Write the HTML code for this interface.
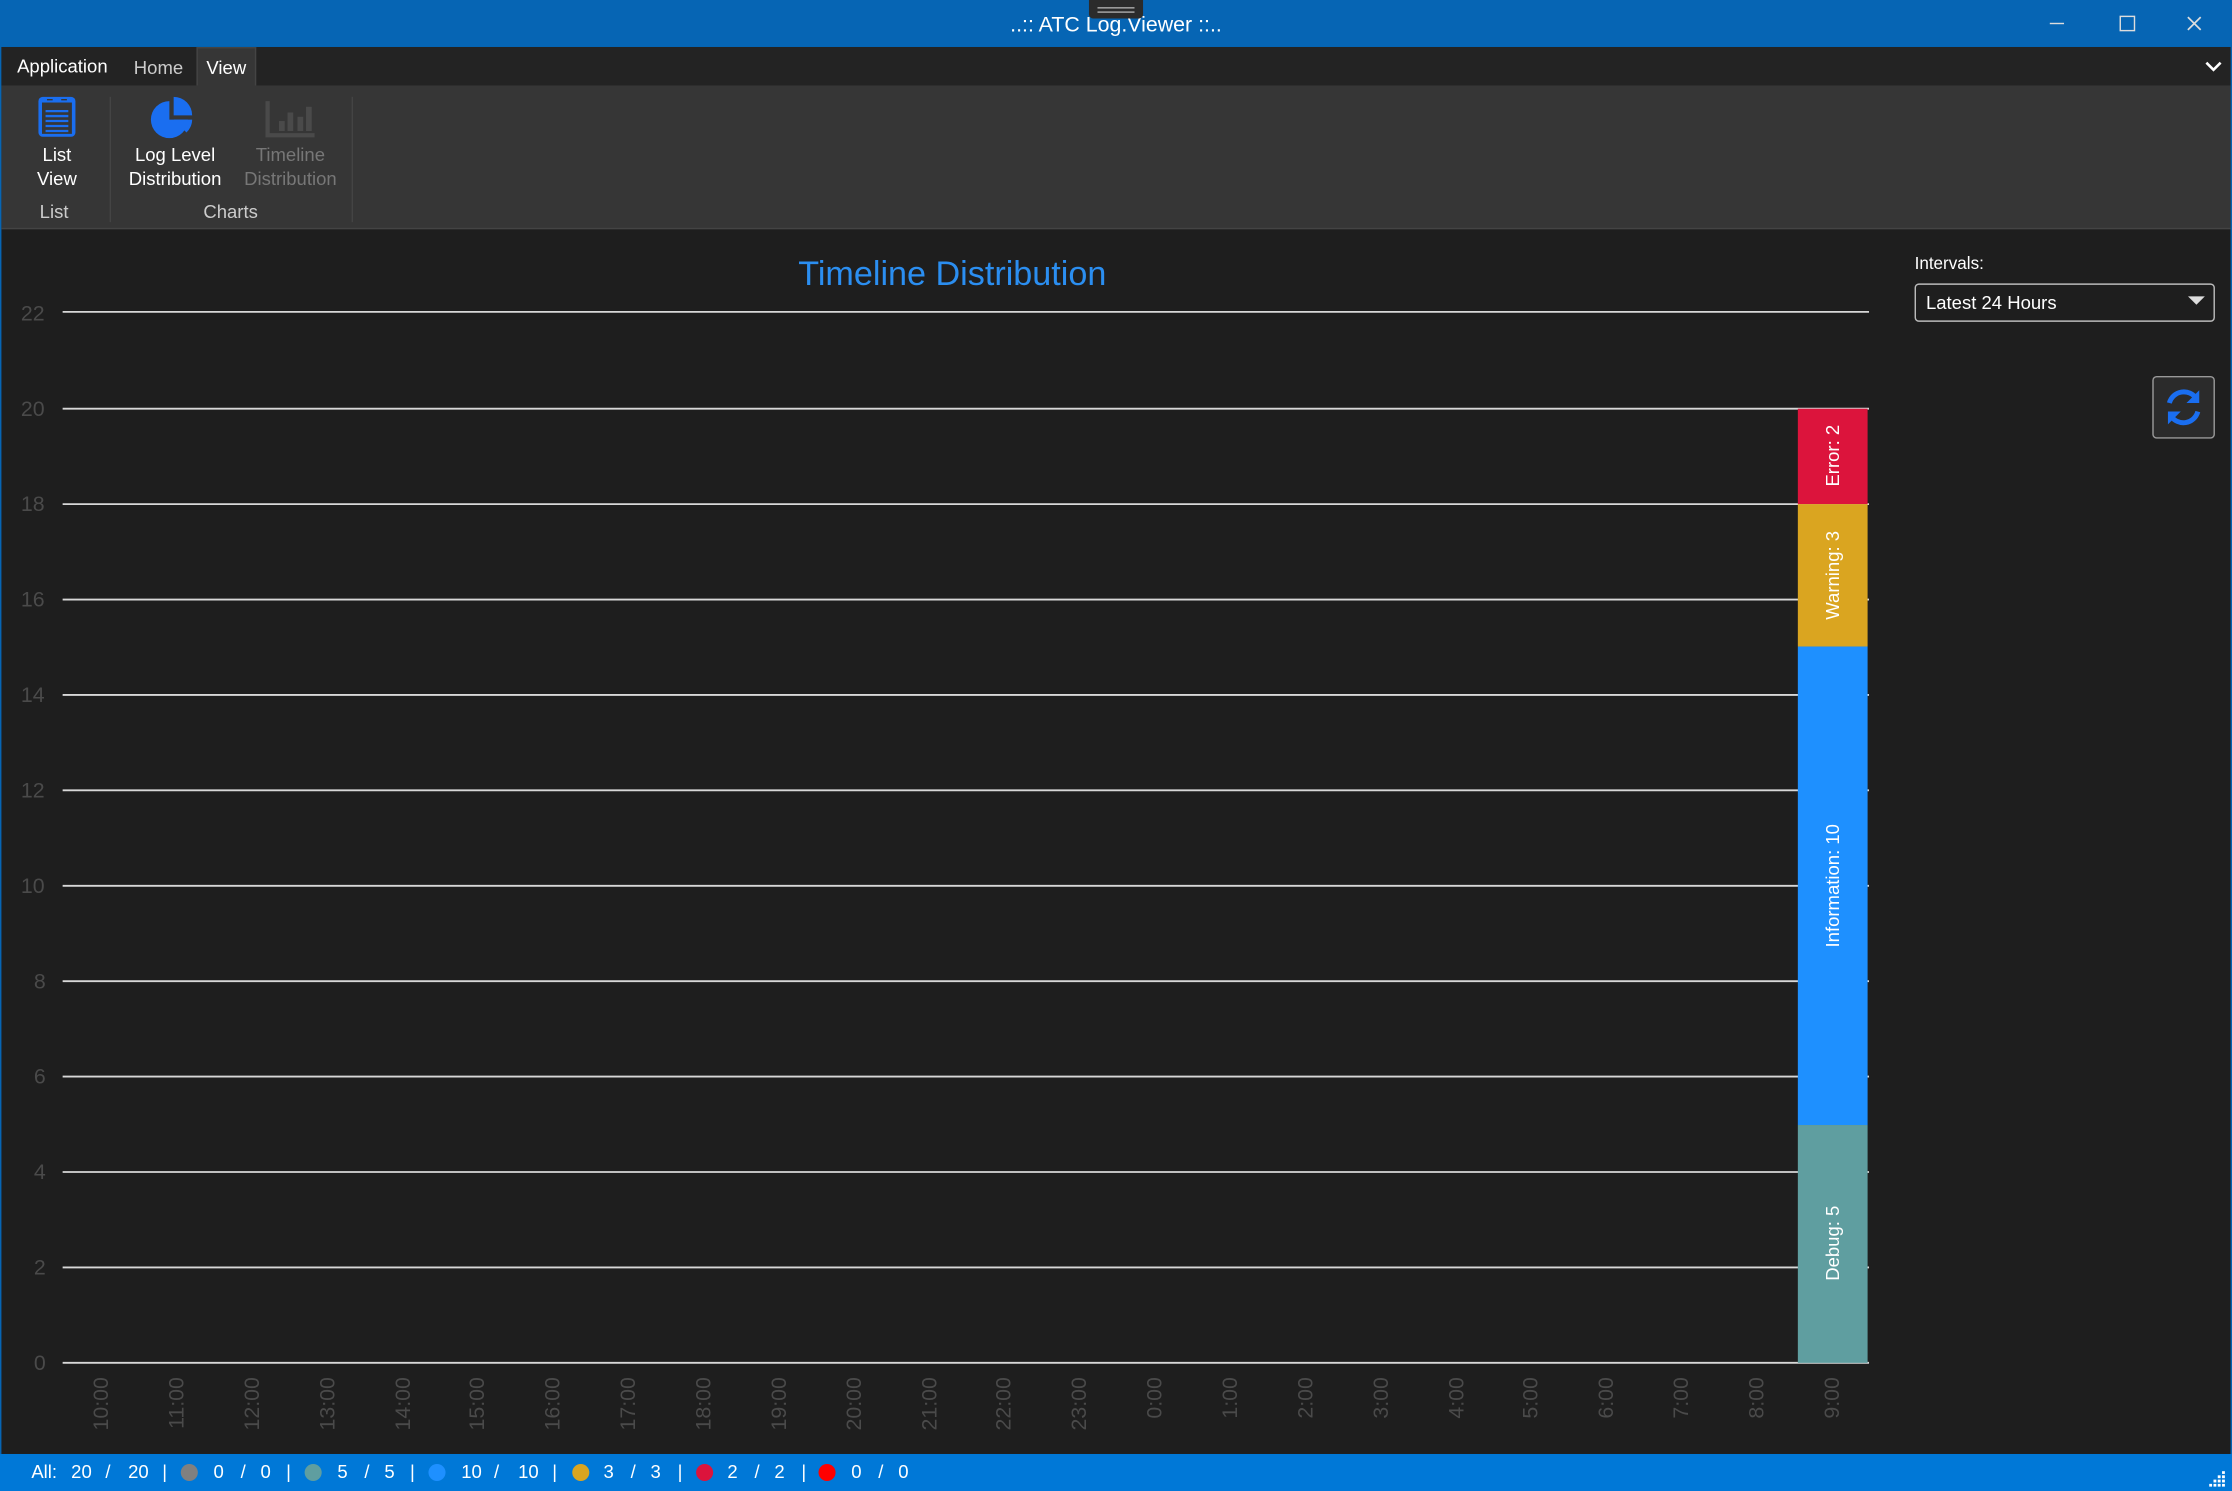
<!DOCTYPE html>
<html><head><meta charset="utf-8"><style>
html,body{margin:0;padding:0;background:#1e1e1e;overflow:hidden;width:2232px;height:1491px}
#w{position:absolute;left:0;top:0;width:1568px;height:1047px;transform:scale(1.42347,1.42407);transform-origin:0 0;font-family:"Segoe UI","Liberation Sans",sans-serif;color:#fff;background:#1e1e1e;overflow:hidden}
.a{position:absolute}
.c{position:absolute;text-align:center;font-size:13px;line-height:17px}
#sb span{position:absolute;top:5px;font-size:13px}
#sb i{position:absolute;top:7px;width:12px;height:12px;border-radius:50%}
</style></head><body><div id="w">
<div class="a" style="left:0;top:0;width:1568px;height:33px;background:#0665b4"></div>
<div class="a" style="left:0;top:0;width:1568px;text-align:center;line-height:35px;font-size:15px">..:: ATC Log.Viewer ::..</div>
<div class="a" style="left:765px;top:0;width:38px;height:13px;background:#2b2b2b;border-radius:0 0 3px 3px"><div style="margin:5px 6px 0;height:1px;background:#aaa"></div><div style="margin:2px 6px 0;height:1px;background:#aaa"></div></div>
<div class="a" style="left:1440px;top:16px;width:10px;height:1px;background:#ddd"></div>
<div class="a" style="left:1489px;top:11px;width:9px;height:9px;border:1px solid #ddd"></div>
<svg class="a" style="left:1536px;top:11px" width="11" height="11"><path d="M1 1l9 9M10 1l-9 9" stroke="#ddd" stroke-width="1.2"/></svg>
<div class="a" style="left:0;top:0;width:1px;height:1047px;background:#0665b4"></div>
<div class="a" style="left:1567px;top:0;width:1px;height:1047px;background:#0665b4"></div>
<div class="a" style="left:1px;top:33px;width:1566px;height:27px;background:#232323"></div>
<div class="a" style="left:12px;top:39px;font-size:13px">Application</div>
<div class="a" style="left:94px;top:40px;font-size:13px;color:#ccc">Home</div>
<div class="a" style="left:138px;top:33px;width:42px;height:28px;background:#363636;border:1px solid #444;border-bottom:none;box-sizing:border-box"></div>
<div class="a" style="left:145px;top:40px;font-size:13px">View</div>
<svg class="a" style="left:1548px;top:42px" width="14" height="10"><path d="M2 2l5 5 5-5" stroke="#fff" stroke-width="1.8" fill="none"/></svg>
<div class="a" style="left:1px;top:60px;width:1566px;height:100px;background:#363636;border-bottom:1px solid #444"></div>
<div class="a" style="left:76px;top:92px;width:1px;height:0"></div>
<div class="a" style="left:77px;top:68px;width:1px;height:88px;background:#444"></div>
<div class="a" style="left:247px;top:68px;width:1px;height:88px;background:#444"></div>
<svg class="a" style="left:26px;top:67px" width="28" height="30"><rect x="1" y="1" width="26" height="28" rx="3" fill="#1a6ef0"/><rect x="3.5" y="5" width="21" height="22" fill="#363636"/><path d="M6 11h16M6 14.5h16M6 18h16M6 21.5h16M6 25h16" stroke="#1a6ef0" stroke-width="1.6"/><path d="M7 3h4M17 3h4" stroke="#363636" stroke-width="1"/></svg>
<svg class="a" style="left:104px;top:66px" width="36" height="34"><path d="M15 5A13 13 0 1 0 28 18H15Z" fill="#1a6ef0"/><path d="M18 2A13 13 0 0 1 31 15H18Z" fill="#1a6ef0"/><path d="M18 18h13a13 13 0 0 1-4 9Z" fill="#1a6ef0"/></svg>
<svg class="a" style="left:186px;top:70px" width="36" height="28"><path d="M2 1v24h33" stroke="#4a4a4a" stroke-width="3" fill="none"/><rect x="10" y="15" width="4" height="7" fill="#4a4a4a"/><rect x="16" y="9" width="4" height="13" fill="#4a4a4a"/><rect x="23" y="12" width="4" height="10" fill="#4a4a4a"/><rect x="29" y="5" width="4" height="17" fill="#4a4a4a"/></svg>
<div class="c" style="left:10px;width:60px;top:100px">List<br>View</div>
<div class="c" style="left:8px;width:60px;top:140px;color:#ccc">List</div>
<div class="c" style="left:83px;width:80px;top:100px">Log Level<br>Distribution</div>
<div class="c" style="left:164px;width:80px;top:100px;color:#777">Timeline<br>Distribution</div>
<div class="c" style="left:122px;width:80px;top:140px;color:#ccc">Charts</div>

<svg class="a" style="left:0;top:0" width="1568" height="1047" font-family="Segoe UI, Liberation Sans, sans-serif">
<text x="669" y="200" text-anchor="middle" font-size="24" fill="#2b8ef0">Timeline Distribution</text>
<g stroke="#d8d8d8" stroke-width="1.3">
<line x1="44" x2="1313" y1="219" y2="219"/><line x1="44" x2="1313" y1="287" y2="287"/><line x1="44" x2="1313" y1="354" y2="354"/><line x1="44" x2="1313" y1="421" y2="421"/><line x1="44" x2="1313" y1="488" y2="488"/><line x1="44" x2="1313" y1="555" y2="555"/><line x1="44" x2="1313" y1="622" y2="622"/><line x1="44" x2="1313" y1="689" y2="689"/><line x1="44" x2="1313" y1="756" y2="756"/><line x1="44" x2="1313" y1="823" y2="823"/><line x1="44" x2="1313" y1="890" y2="890"/><line x1="44" x2="1313" y1="957" y2="957"/>
</g>
<g fill="#4a4a4a" font-size="15" text-anchor="middle">
<text x="23" y="225">22</text><text x="23" y="292">20</text><text x="23" y="359">18</text><text x="23" y="426">16</text><text x="23" y="493">14</text><text x="23" y="560">12</text><text x="23" y="627">10</text><text x="28" y="694">8</text><text x="28" y="761">6</text><text x="28" y="828">4</text><text x="28" y="895">2</text><text x="28" y="962">0</text>
</g>
<rect x="1263" y="287" width="49" height="67" fill="#dc143c"/>
<rect x="1263" y="354" width="49" height="100" fill="#daa520"/>
<rect x="1263" y="454" width="49" height="336" fill="#1e90ff"/>
<rect x="1263" y="790" width="49" height="167" fill="#5f9ea0"/>
<g fill="#fff" font-size="13" text-anchor="middle">
<text transform="translate(1292,320) rotate(-90)">Error: 2</text>
<text transform="translate(1292,404) rotate(-90)">Warning: 3</text>
<text transform="translate(1292,622) rotate(-90)">Information: 10</text>
<text transform="translate(1292,873) rotate(-90)">Debug: 5</text>
</g>
<g fill="#4a4a4a" font-size="15" text-anchor="end">
<text transform="translate(76,967) rotate(-90)">10:00</text><text transform="translate(129,967) rotate(-90)">11:00</text><text transform="translate(182,967) rotate(-90)">12:00</text><text transform="translate(235,967) rotate(-90)">13:00</text><text transform="translate(288,967) rotate(-90)">14:00</text><text transform="translate(340,967) rotate(-90)">15:00</text><text transform="translate(393,967) rotate(-90)">16:00</text><text transform="translate(446,967) rotate(-90)">17:00</text><text transform="translate(499,967) rotate(-90)">18:00</text><text transform="translate(552,967) rotate(-90)">19:00</text><text transform="translate(605,967) rotate(-90)">20:00</text><text transform="translate(658,967) rotate(-90)">21:00</text><text transform="translate(710,967) rotate(-90)">22:00</text><text transform="translate(763,967) rotate(-90)">23:00</text><text transform="translate(816,967) rotate(-90)">0:00</text><text transform="translate(869,967) rotate(-90)">1:00</text><text transform="translate(922,967) rotate(-90)">2:00</text><text transform="translate(975,967) rotate(-90)">3:00</text><text transform="translate(1028,967) rotate(-90)">4:00</text><text transform="translate(1080,967) rotate(-90)">5:00</text><text transform="translate(1133,967) rotate(-90)">6:00</text><text transform="translate(1186,967) rotate(-90)">7:00</text><text transform="translate(1239,967) rotate(-90)">8:00</text><text transform="translate(1292,967) rotate(-90)">9:00</text>
</g>
</svg>

<div class="a" style="left:1345px;top:178px;font-size:12px">Intervals:</div>
<div class="a" style="left:1345px;top:199px;width:211px;height:27px;border:1px solid #bbb;border-radius:3px;box-sizing:border-box;background:#1e1e1e"></div>
<div class="a" style="left:1353px;top:205px;font-size:13px">Latest 24 Hours</div>
<svg class="a" style="left:1537px;top:208px" width="12" height="8"><path d="M0 0h12L6 6Z" fill="#ddd"/></svg>
<div class="a" style="left:1512px;top:264px;width:44px;height:44px;border:1px solid #999;border-radius:3px;box-sizing:border-box;background:#2b2b2b"></div>
<svg class="a" style="left:1518px;top:270px" width="32" height="32"><path d="M6 13A10.5 10.5 0 0 1 25 10" stroke="#1a6ef0" stroke-width="3.5" fill="none"/><path d="M27 4v9h-9Z" fill="#1a6ef0"/><path d="M26 19A10.5 10.5 0 0 1 7 22" stroke="#1a6ef0" stroke-width="3.5" fill="none"/><path d="M5 28v-9h9Z" fill="#1a6ef0"/></svg>

<div id="sb" class="a" style="left:0;top:1021px;width:1568px;height:26px;background:#0078d7">
<span style="left:22px">All:</span><span style="left:50px">20</span><span style="left:74px">/</span><span style="left:90px">20</span><span style="left:114px">|</span>
<i style="left:127px;background:#808080"></i><span style="left:150px">0</span><span style="left:169px">/</span><span style="left:183px">0</span><span style="left:201px">|</span>
<i style="left:214px;background:#5f9ea0"></i><span style="left:237px">5</span><span style="left:256px">/</span><span style="left:270px">5</span><span style="left:288px">|</span>
<i style="left:301px;background:#1e90ff"></i><span style="left:324px">10</span><span style="left:347px">/</span><span style="left:364px">10</span><span style="left:388px">|</span>
<i style="left:402px;background:#daa520"></i><span style="left:424px">3</span><span style="left:443px">/</span><span style="left:457px">3</span><span style="left:476px">|</span>
<i style="left:489px;background:#dc143c"></i><span style="left:511px">2</span><span style="left:530px">/</span><span style="left:544px">2</span><span style="left:563px">|</span>
<i style="left:575px;background:#ff0000"></i><span style="left:598px">0</span><span style="left:617px">/</span><span style="left:631px">0</span>
</div>
<svg class="a" style="left:1551px;top:1033px" width="13" height="11" fill="#fff"><rect x="10" y="0" width="2" height="2"/><rect x="7" y="3" width="2" height="2"/><rect x="10" y="3" width="2" height="2"/><rect x="4" y="6" width="2" height="2"/><rect x="7" y="6" width="2" height="2"/><rect x="10" y="6" width="2" height="2"/><rect x="1" y="9" width="2" height="2"/><rect x="4" y="9" width="2" height="2"/><rect x="7" y="9" width="2" height="2"/><rect x="10" y="9" width="2" height="2"/></svg>
</div></body></html>
